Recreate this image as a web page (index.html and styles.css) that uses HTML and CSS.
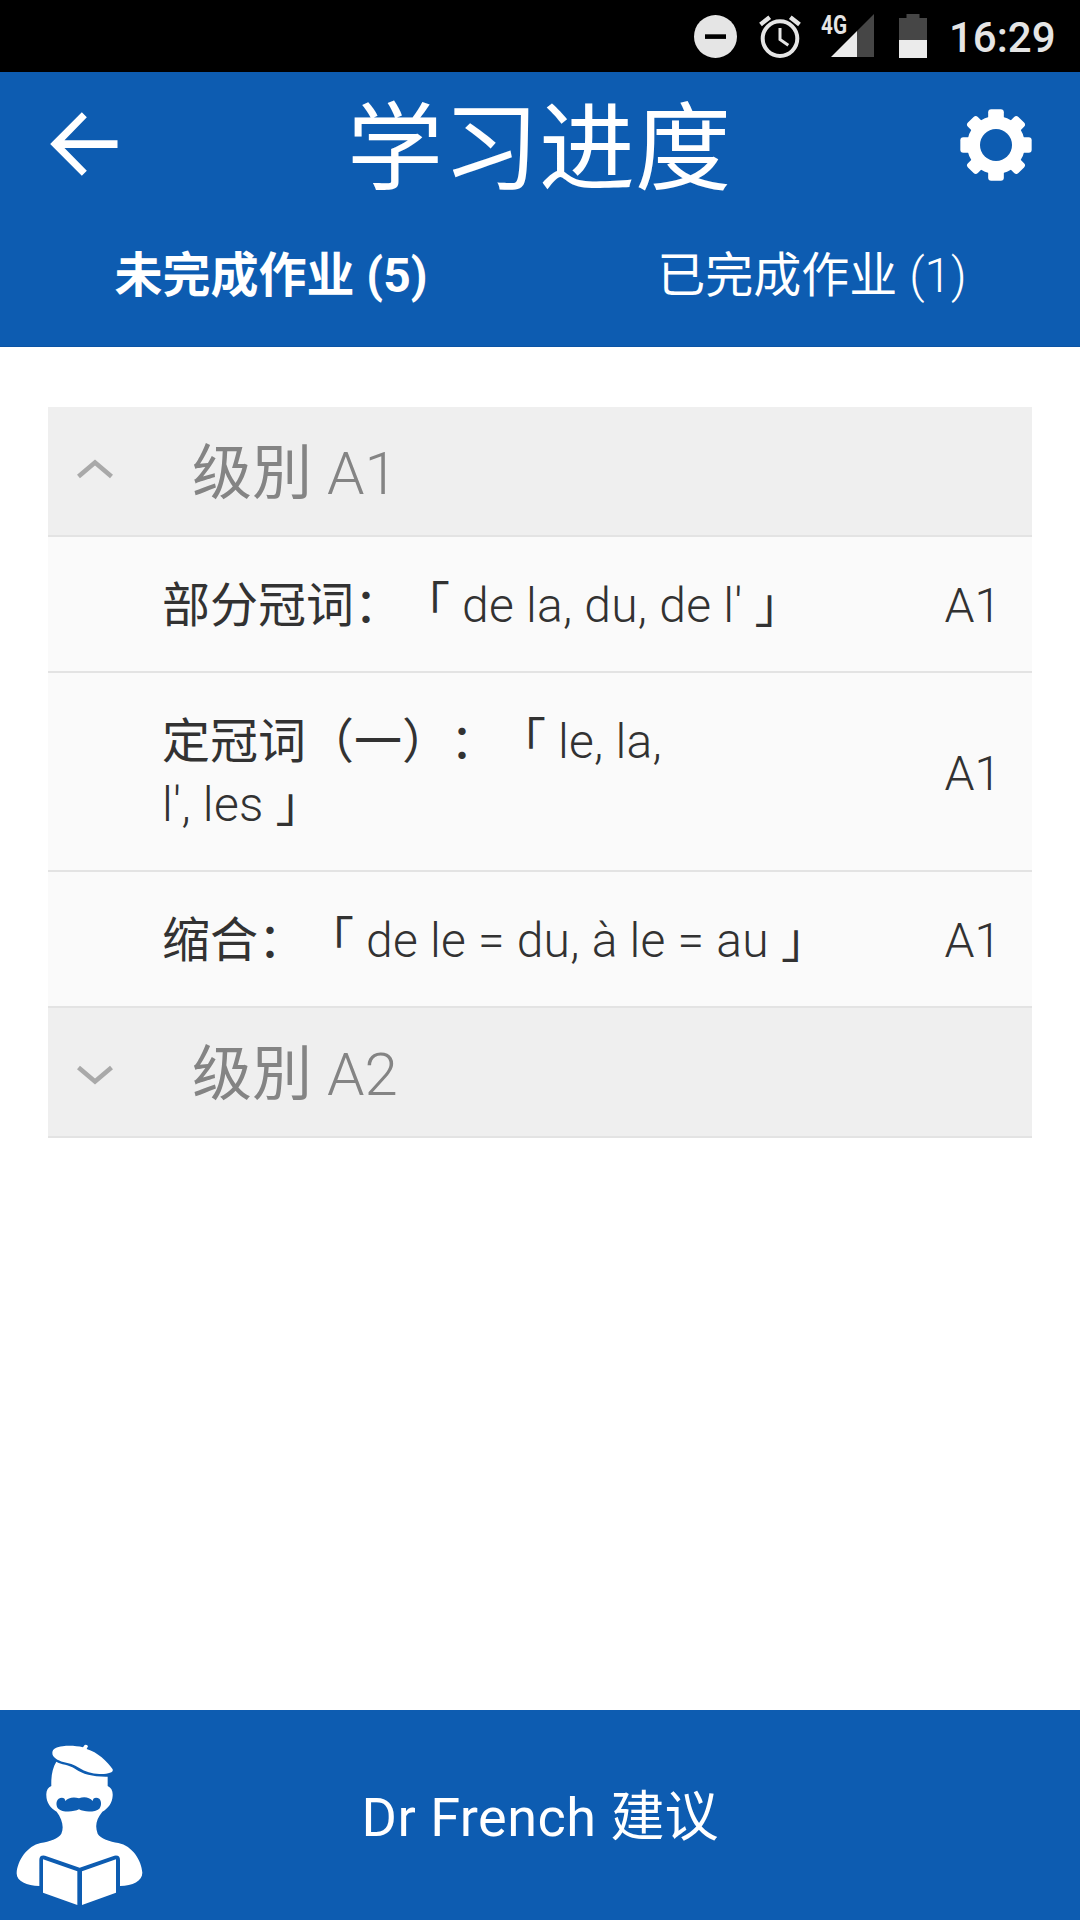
FILE: index.html
```html
<!DOCTYPE html>
<html lang="zh-CN">
<head>
<meta charset="utf-8">
<title>学习进度</title>
<link rel="stylesheet" href="styles.css">
</head>
<body>
<div class="screen">
  <div class="status">
    <svg class="dnd" viewBox="0 0 43 43"><circle cx="21.5" cy="21.5" r="21.5" fill="#e5e5e5"/><rect x="11" y="19.3" width="21" height="4.6" fill="#000"/></svg>
    <svg class="alarm" viewBox="0 0 42 43" fill="none" stroke="#e5e5e5"><circle cx="21" cy="23.6" r="17.3" stroke-width="4"/><path d="M21 13V24.5L29.3 30.3" stroke-width="3"/><path d="M1.5 9.5L10.7 2.2M31.3 2.2L40.5 9.5" stroke-width="4.4"/></svg>
    <svg class="signal" viewBox="0 0 54 44"><path d="M54 0V43H37V17Z" fill="#464646"/><path d="M37 17V43H11Z" fill="#ebebeb"/><text class="signal-type" x="1" y="19.5" textLength="26" lengthAdjust="spacingAndGlyphs">4G</text></svg>
    <svg class="battery" viewBox="0 0 28 44"><path d="M7.5 0H20.5V4H28V26H0V4H7.5Z" fill="#464646"/><path d="M0 26H28V44H0Z" fill="#ebebeb"/></svg>
    <span class="clock">16:29</span>
  </div>

  <header class="header">
    <div class="titlebar">
      <svg class="back" viewBox="151 126 203 192"><path d="M151 222L246 127L261 142L194 211H353V234H194L261 302L246 317Z" fill="#fff"/></svg>
      <h1 class="title">学习进度</h1>
      <svg class="gear" viewBox="-108 -108 216 216">
        <g fill="#fff">
          <circle r="87"/>
          <rect x="-23.5" y="-107" width="47" height="214" rx="9"/>
          <rect x="-23.5" y="-107" width="47" height="214" rx="9" transform="rotate(90)"/>
          <rect x="-21" y="-107" width="42" height="214" rx="9" transform="rotate(45)"/>
          <rect x="-21" y="-107" width="42" height="214" rx="9" transform="rotate(-45)"/>
        </g>
        <circle r="48" fill="#0d5cb1"/>
      </svg>
    </div>
    <nav class="tabs">
      <a class="tab tab-active">未完成作业 (5)</a>
      <a class="tab">已完成作业 <span class="light">(1)</span></a>
    </nav>
  </header>

  <main class="content">
    <section class="list">
      <div class="level">
        <svg class="chevron chevron-up" viewBox="0 0 36 20"><path d="M1.5 17.5L18 3.5L34.5 17.5" fill="none" stroke="#a9a9a9" stroke-width="4.6"/></svg>
        <h2 class="level-name">级別 <span class="light">A1</span></h2>
      </div>
      <div class="row"><p class="name">部分冠词：「<span class="latin"> de la, du, de l' </span>」</p><span class="grade">A1</span></div>
      <div class="row"><p class="name">定冠词（一）：「<span class="latin"> le, la,<br>l', les </span>」</p><span class="grade">A1</span></div>
      <div class="row"><p class="name">缩合：「<span class="latin"> de le = du, à le = au </span>」</p><span class="grade">A1</span></div>
      <div class="level">
        <svg class="chevron chevron-down" viewBox="0 0 36 20"><path d="M1.5 2.5L18 16.5L34.5 2.5" fill="none" stroke="#a9a9a9" stroke-width="4.6"/></svg>
        <h2 class="level-name">级別 <span class="light">A2</span></h2>
      </div>
    </section>
  </main>

  <footer class="footer">
    <svg class="mascot" viewBox="0 30 480 630" fill="#fff">
      <path d="M157 158C158 146 170 141 188 139C208 136 230 138 249 142L254 135Q262 133 264 139L260 147C292 156 322 184 338 208C342 219 320 223 298 222C276 221 255 215 238 204C222 193 206 190 190 186C174 181 156 172 157 158Z"/>
      <path d="M169 185C182 194 208 193 226 207C248 223 282 231 323 230V258C334 263 339 273 338 287C337 308 325 325 307 335C289 357 284 378 293 401C301 416 330 424 355 429C397 437 425 482 427 518C427 543 398 557 360 558V480Q360 464 343 467L239 503L135 467Q118 464 118 480V558C80 556 49 544 50 519C52 482 82 437 122 429C148 424 176 416 184 401C193 381 186 356 170 335C152 326 139 308 139 286C138 272 144 262 154 258C153 228 157 205 169 185Z"/>
      <path d="M129 478L232 514V615L129 578ZM246 514L348 478V578L246 615Z"/>
      <path fill="#0d5cb1" d="M237 295C221 289 204 293 196 303C196 293 185 290 176 296C167 303 168 318 175 326C187 338 222 336 237 328C252 337 286 337 298 326C305 317 305 303 298 296C289 290 278 293 278 303C268 292 253 289 237 295Z"/>
    </svg>
    <span class="advice"><span class="brand">Dr French </span>建议</span>
  </footer>
</div>
</body>
</html>
```
FILE: styles.css
```css
* { box-sizing: border-box; margin: 0; padding: 0; }
body {
  background: #fff;
  font-family: Roboto, "Noto Sans CJK SC", sans-serif;
  font-weight: 400;
  text-spacing-trim: space-all;
}
svg { display: block; flex: none; }
.light { font-weight: 300; }
.screen { width: 1080px; height: 1920px; display: flex; flex-direction: column; overflow: hidden; }

.status {
  height: 72px; background: #000; flex: none;
  display: flex; justify-content: flex-end; align-items: flex-start;
  padding: 14px 25px 0 0;
}
.dnd { width: 43px; height: 43px; margin: 1px 22px 0 0; }
.alarm { width: 42px; height: 43px; margin: 1px 19px 0 0; }
.signal { width: 54px; height: 44px; margin-right: 25px; overflow: visible; }
.signal-type { font-weight: 700; font-size: 26px; fill: #e5e5e5; }
.battery { width: 28px; height: 44px; margin-right: 22px; }
.clock { font-size: 42px; font-weight: 500; line-height: 46px; color: #e5e5e5; width: 106px; white-space: nowrap; padding-top: 1px; }

.header { height: 275px; flex: none; background: #0d5cb1; color: #fff; border-bottom: 1px solid #0c54a4; }
.titlebar { height: 144px; display: flex; align-items: center; justify-content: space-between; padding: 0 48px 0 50px; }
.back { width: 68px; height: 64px; }
.title { font-size: 96px; font-weight: 400; line-height: 134px; padding-top: 10px; }
.gear { width: 72px; height: 72px; margin-top: 1px; }
.tabs { display: grid; grid-template-columns: 1fr 1fr; text-align: center; font-size: 48px; line-height: 116px; padding-top: 2px; }
.tab { padding-left: 4px; }
.tab-active { font-weight: 700; padding-left: 2px; }

.content { flex: 1; padding: 60px 48px 0; }
.level {
  height: 130px; display: flex; align-items: center;
  background: #efefef; border-bottom: 2px solid #e3e3e3; padding-left: 29px;
}
.chevron { width: 36px; height: 20px; margin-right: 79px; }
.chevron-up { margin-bottom: 4px; }
.chevron-down { margin-top: 5px; }
.level-name { font-size: 60px; font-weight: 400; color: #848484; padding-bottom: 7px; }
.row {
  display: flex; align-items: center; justify-content: space-between;
  background: #fafafa; color: #323232; border-bottom: 2px solid #e3e3e3;
  padding: 37px 31px 34px 114px; font-size: 48px; line-height: 63px;
}
.name { white-space: nowrap; }
.latin { font-weight: 300; letter-spacing: .25px; }
.grade { font-weight: 300; }

.footer { height: 210px; flex: none; display: flex; align-items: center; background: #0d5cb1; color: #fff; }
.mascot { width: 160px; height: 210px; }
.advice { flex: 1; padding: 0 160px 6px 0; text-align: center; font-size: 54px; font-weight: 400; }
.brand { letter-spacing: .5px; }
```
